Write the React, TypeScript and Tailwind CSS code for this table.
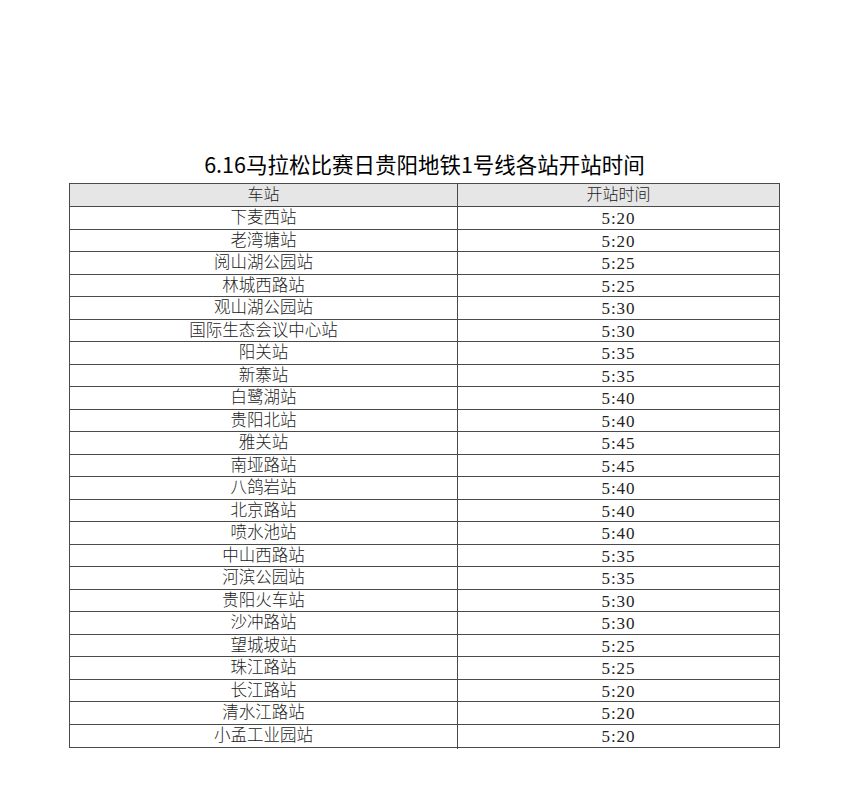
const rows: [string, string][] = [
  ["下麦西站", "5:20"],
  ["老湾塘站", "5:20"],
  ["阅山湖公园站", "5:25"],
  ["林城西路站", "5:25"],
  ["观山湖公园站", "5:30"],
  ["国际生态会议中心站", "5:30"],
  ["阳关站", "5:35"],
  ["新寨站", "5:35"],
  ["白鹭湖站", "5:40"],
  ["贵阳北站", "5:40"],
  ["雅关站", "5:45"],
  ["南垭路站", "5:45"],
  ["八鸽岩站", "5:40"],
  ["北京路站", "5:40"],
  ["喷水池站", "5:40"],
  ["中山西路站", "5:35"],
  ["河滨公园站", "5:35"],
  ["贵阳火车站", "5:30"],
  ["沙冲路站", "5:30"],
  ["望城坡站", "5:25"],
  ["珠江路站", "5:25"],
  ["长江路站", "5:20"],
  ["清水江路站", "5:20"],
  ["小孟工业园站", "5:20"],
];

export default function App() {
  return (
    <div className="w-[850px] h-[810px] bg-white text-[#222]">
      <div className="pt-[148px] pl-[69px]">
        <h1 className="w-[711px] text-center text-[21.5px] leading-[32px] h-[35px] font-['Noto_Sans_CJK_SC',sans-serif] font-normal text-black">
          6.16马拉松比赛日贵阳地铁1号线各站开站时间
        </h1>
        <div className="w-[711px] border-[1.5px] border-[#4a4a4a] font-['Liberation_Serif','Noto_Sans_CJK_SC',serif] text-[16px]">
          <div className="grid grid-cols-[388px_1fr] h-[23px] bg-[#e6e6e6] border-b-[1.5px] border-[#4a4a4a]">
            <div className="border-r-[1.5px] border-[#4a4a4a] text-center leading-[22px] font-light">车站</div>
            <div className="text-center leading-[22px] font-light">开站时间</div>
          </div>
          {rows.map(([name, time], i) => (
            <div
              key={name}
              className={
                "grid grid-cols-[388px_1fr] h-[22.5px] " +
                (i < rows.length - 1 ? "border-b-[1.5px] border-[#4a4a4a]" : "")
              }
            >
              <div className="border-r-[1.5px] border-[#4a4a4a] text-center leading-[21px] text-[16.5px] font-light">{name}</div>
              <div className="text-center leading-[24px] text-[17px] tracking-[1px]">{time}</div>
            </div>
          ))}
        </div>
      </div>
    </div>
  );
}
